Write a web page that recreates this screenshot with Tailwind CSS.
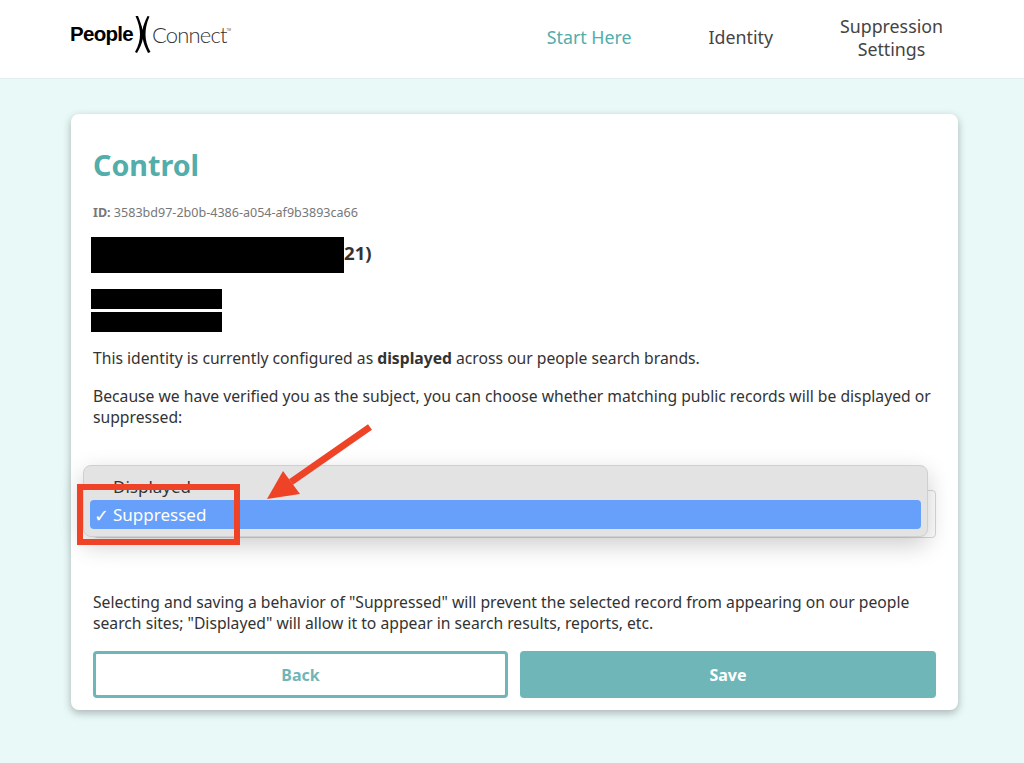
<!DOCTYPE html>
<html lang="en">
<head>
  <meta charset="UTF-8">
  <meta name="viewport" content="width=device-width, initial-scale=1">
  <title>Control</title>
  <script src="https://cdn.jsdelivr.net/npm/@tailwindcss/browser@4"></script>
</head>
<body class="bg-[#e8f9f8] h-[763px] overflow-hidden font-['Noto_Sans',sans-serif] text-[#333]">

  <!-- header -->
  <header class="h-[79px] bg-white border-b border-[#e3efee] flex items-start">
    <div class="ml-[70px] mt-[15px] flex items-center h-[38px] text-black">
      <span class="font-['Liberation_Sans',sans-serif] font-bold text-[20.500px] tracking-[-0.7px]">People</span>
      <svg class="w-[17px] h-[37px] mx-[1px]" viewBox="0 0 17 37">
        <path d="M1.500 0 L4 0 C6 5 8 10 8.500 14 C9 10 11 5 13.500 0 L15.500 0.500 C12.500 7 11.500 13 11.500 18.500 C11.500 24 13 30 16.500 36 L14 37 C11.500 32 9.500 27 8.800 23 C8 27 6 32 3 37 L1 36 C4.500 30 6 24 6 18.500 C6 13 4.500 7 1.500 0 Z" fill="#000"/>
      </svg>
      <span class="font-['Lato',sans-serif] font-light text-[22px] tracking-[-0.85px] text-[#333]">Connect</span>
      <span class="text-[3px] self-start mt-[13px] text-[#555]">TM</span>
    </div>
    <nav class="ml-auto flex items-start text-[17.800px] leading-[23px] text-[#444]">
      <a class="mt-[26px] text-[#52adab]">Start Here</a>
      <a class="mt-[26px] ml-[77px]">Identity</a>
      <a class="mt-[15px] ml-[67px] mr-[81px] text-center">Suppression<br>Settings</a>
    </nav>
  </header>

  <!-- card -->
  <main class="relative ml-[71px] mt-[35px] w-[887px] h-[596px] bg-white rounded-lg shadow-[0_3px_8px_rgba(0,0,0,0.28)] px-[22px] pt-[29px]">
    <h1 class="text-[28.700px] leading-[44px] font-bold text-[#52adab]">Control</h1>
    <p class="mt-[18px] text-[12.550px] leading-[16px] text-[#777]"><b>ID:</b> 3583bd97-2b0b-4386-a054-af9b3893ca66</p>

    <div class="mt-[16px] -ml-[2px] flex items-center h-[36px]">
      <div class="w-[253px] h-[36px] bg-black"></div>
      <span class="text-[18.600px] leading-[36px] -mt-[4px] font-bold text-[#333]">21)</span>
    </div>
    <div class="mt-[16px] -ml-[2px] flex flex-col gap-[3px]">
      <div class="w-[131px] h-[20px] bg-black"></div>
      <div class="w-[131px] h-[20px] bg-black"></div>
    </div>

    <p class="mt-[16px] text-[15.700px] leading-[21px]">This identity is currently configured as <b>displayed</b> across our people search brands.</p>
    <p class="mt-[17px] text-[15.700px] leading-[21px]">Because we have verified you as the subject, you can choose whether matching public records will be displayed or suppressed:</p>

    <!-- select behind the open menu -->
    <div class="mt-[62px] h-[48px] border border-[#d8d8d8] rounded"></div>

    <p class="mt-[54px] text-[15.700px] leading-[21px]">Selecting and saving a behavior of "Suppressed" will prevent the selected record from appearing on our people search sites; "Displayed" will allow it to appear in search results, reports, etc.</p>

    <div class="mt-[17px] flex gap-[12px]">
      <button class="w-[415px] h-[47px] border-[3px] border-[#6fb6b8] rounded text-[16px] font-bold text-[#6fb6b8]">Back</button>
      <button class="w-[416px] h-[47px] bg-[#6fb6b8] rounded text-[16px] font-bold text-white">Save</button>
    </div>

    <!-- open select menu -->
    <div class="absolute left-[12px] top-[351px] w-[845px] h-[72px] bg-[#e3e3e3] border border-[#cfcfcf] rounded-lg shadow-[0_8px_24px_rgba(0,0,0,0.2)] px-[6px] pt-[9px]">
      <div class="pl-[23px] text-[17px] leading-[24px] text-[#333]">Displayed</div>
      <div class="mt-[1px] h-[29px] pt-[1px] bg-[#66a0fa] rounded flex items-center text-white text-[17px]">
        <span class="w-[23px] text-center text-[18px] font-medium">✓</span>Suppressed
      </div>
    </div>

    <!-- annotation box -->
    <div class="absolute left-[6px] top-[370px] w-[163px] h-[61px] border-[6px] border-[#ee4326]"></div>
    <!-- annotation arrow -->
    <svg class="absolute left-[190px] top-[308px] w-[120px] h-[85px]" viewBox="0 0 120 85">
      <path d="M109 5 L30 60" stroke="#ee4326" stroke-width="7" fill="none"/>
      <path d="M6 77 L22 49 L39 72 Z" fill="#ee4326"/>
    </svg>
  </main>

</body>
</html>
